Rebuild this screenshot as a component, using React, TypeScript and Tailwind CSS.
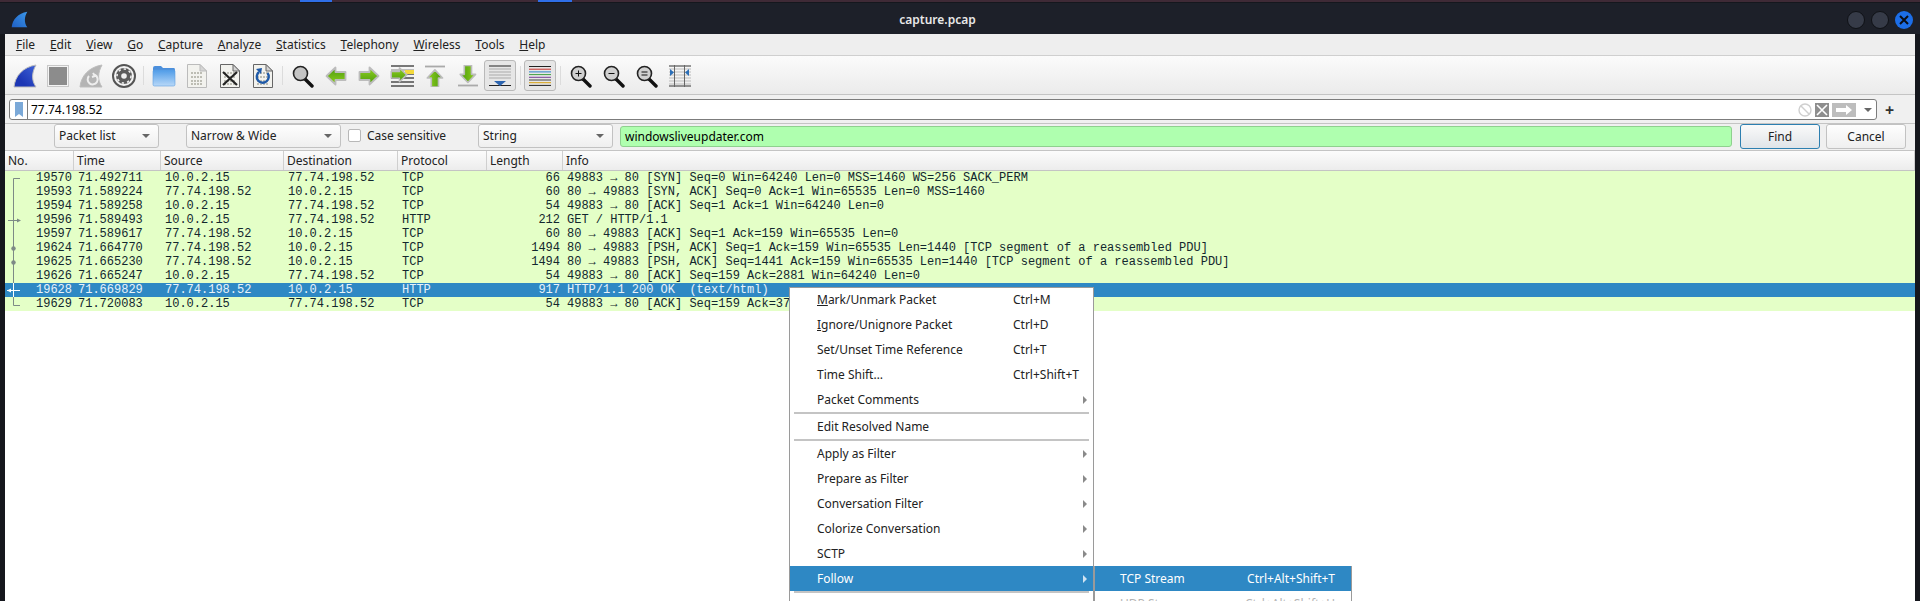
import type { ReactNode } from "react";

type Row = {
  no: string;
  time: string;
  src: string;
  dst: string;
  proto: string;
  len: string;
  info: string;
  mark: "first" | "line" | "req" | "dot" | "resp" | "last";
};

const CLIENT = "10.0.2.15";
const SERVER = "77.74.198.52";

const rows: Row[] = [
  { no: "19570", time: "71.492711", src: CLIENT, dst: SERVER, proto: "TCP", len: "66", info: "49883 → 80 [SYN] Seq=0 Win=64240 Len=0 MSS=1460 WS=256 SACK_PERM", mark: "first" },
  { no: "19593", time: "71.589224", src: SERVER, dst: CLIENT, proto: "TCP", len: "60", info: "80 → 49883 [SYN, ACK] Seq=0 Ack=1 Win=65535 Len=0 MSS=1460", mark: "line" },
  { no: "19594", time: "71.589258", src: CLIENT, dst: SERVER, proto: "TCP", len: "54", info: "49883 → 80 [ACK] Seq=1 Ack=1 Win=64240 Len=0", mark: "line" },
  { no: "19596", time: "71.589493", src: CLIENT, dst: SERVER, proto: "HTTP", len: "212", info: "GET / HTTP/1.1", mark: "req" },
  { no: "19597", time: "71.589617", src: SERVER, dst: CLIENT, proto: "TCP", len: "60", info: "80 → 49883 [ACK] Seq=1 Ack=159 Win=65535 Len=0", mark: "line" },
  { no: "19624", time: "71.664770", src: SERVER, dst: CLIENT, proto: "TCP", len: "1494", info: "80 → 49883 [PSH, ACK] Seq=1 Ack=159 Win=65535 Len=1440 [TCP segment of a reassembled PDU]", mark: "dot" },
  { no: "19625", time: "71.665230", src: SERVER, dst: CLIENT, proto: "TCP", len: "1494", info: "80 → 49883 [PSH, ACK] Seq=1441 Ack=159 Win=65535 Len=1440 [TCP segment of a reassembled PDU]", mark: "dot" },
  { no: "19626", time: "71.665247", src: CLIENT, dst: SERVER, proto: "TCP", len: "54", info: "49883 → 80 [ACK] Seq=159 Ack=2881 Win=64240 Len=0", mark: "line" },
  { no: "19628", time: "71.669829", src: SERVER, dst: CLIENT, proto: "HTTP", len: "917", info: "HTTP/1.1 200 OK  (text/html)", mark: "resp" },
  { no: "19629", time: "71.720083", src: CLIENT, dst: SERVER, proto: "TCP", len: "54", info: "49883 → 80 [ACK] Seq=159 Ack=3744 Win=64240 Len=0", mark: "last" },
];

const menus: [string, string][] = [
  ["F", "ile"], ["E", "dit"], ["V", "iew"], ["G", "o"], ["C", "apture"], ["A", "nalyze"],
  ["S", "tatistics"], ["T", "elephony"], ["W", "ireless"], ["T", "ools"], ["H", "elp"],
];

function Fin({ size = 24, dim = false, light = false }: { size?: number; dim?: boolean; light?: boolean }) {
  const fill = dim ? "#b4b4b4" : light ? "url(#finLight)" : "url(#finDark)";
  return (
    <svg width={size} height={size} viewBox="0 0 24 24">
      <defs>
        <linearGradient id="finDark" x1="0" y1="1" x2="1" y2="0">
          <stop offset="0.3" stopColor="#1c36b4" />
          <stop offset="1" stopColor="#3f63d8" />
        </linearGradient>
        <linearGradient id="finLight" x1="0" y1="1" x2="1" y2="0">
          <stop offset="0" stopColor="#1f5fc4" />
          <stop offset="1" stopColor="#3a96e8" />
        </linearGradient>
      </defs>
      <path d="M1 23 C2 12 10 3 23 1 C19 8 18 16 23 23 Z" fill={fill} stroke={light ? "none" : "#bdbdbd"} strokeWidth="1" />
      {dim && <path d="M16 11 a5 5 0 1 1 -6 1 M14 9 l2 3 -3 1" fill="none" stroke="#eee" strokeWidth="2" />}
    </svg>
  );
}

function DocBase({ children, dark = false }: { children?: ReactNode; dark?: boolean }) {
  const edge = dark ? "#666" : "#bbb";
  return (
    <svg width="22" height="24" viewBox="0 0 22 24">
      <path d="M1.5 .5 H14 L20.5 7 V23.5 H1.5 Z" fill="#f2f2ee" stroke={edge} />
      <path d="M14 .5 V7 H20.5 Z" fill="#d5d5d5" stroke={edge} />
      {[9, 13, 17, 20].map((y) => (
        <path key={y} d={`M5 ${y} H17`} stroke="#bdbdb4" strokeWidth="2" strokeDasharray="2 1" />
      ))}
      {children}
    </svg>
  );
}

function Arrow({ dir }: { dir: "left" | "right" | "up" | "down" }) {
  const rot = { right: 0, left: 180, up: 270, down: 90 }[dir];
  return (
    <g transform={`rotate(${rot} 11 11)`}>
      <path d="M1.5 7 H11.5 V2.5 L20.5 11 L11.5 19.5 V15 H1.5 Z" fill="url(#green)" stroke="#bcbcbc" strokeWidth="1.8" strokeLinejoin="round" />
    </g>
  );
}

function GreenDefs() {
  return (
    <defs>
      <linearGradient id="green" x1="0" y1="0" x2="0" y2="1">
        <stop offset="0" stopColor="#8fd11f" />
        <stop offset="1" stopColor="#4c9a0c" />
      </linearGradient>
    </defs>
  );
}

function GreenArrow({ dir }: { dir: "left" | "right" }) {
  return (
    <svg width="22" height="22" viewBox="0 0 22 22">
      <GreenDefs />
      <Arrow dir={dir} />
    </svg>
  );
}

function Lens({ kind }: { kind?: "plus" | "minus" | "equal" }) {
  return (
    <svg width="22" height="24" viewBox="0 0 22 24">
      <path d="M13 15 L20 22" stroke="#111" strokeWidth="3.4" strokeLinecap="round" />
      <circle cx="8.5" cy="9.5" r="7" fill={kind ? "#d0d0d0" : "#c4c4c4"} stroke="#222" strokeWidth="1.6" />
      {kind && <path d="M5.5 9.5 H11.5" stroke="#111" strokeWidth="1" transform={kind === "equal" ? "translate(0 -1.5)" : undefined} />}
      {kind === "equal" && <path d="M5.5 11 H11.5" stroke="#111" strokeWidth="1" />}
      {kind === "plus" && <path d="M8.5 6.5 V12.5" stroke="#111" strokeWidth="1" />}
    </svg>
  );
}

function Btn({ children, on = false }: { children: ReactNode; on?: boolean }) {
  return on ? (
    <div className="w-[32px] h-[31px] mr-[1px] flex items-center justify-center rounded-[3px] border border-[#b9b9b9] bg-[#e6e6e6]">{children}</div>
  ) : (
    <div className="w-[33px] h-[31px] flex items-center justify-center">{children}</div>
  );
}

function Sep() {
  return (
    <div className="w-[7px] flex justify-center">
      <div className="w-px h-[19px] bg-[#dcdcdc]" />
    </div>
  );
}

function Toolbar() {
  return (
    <div className="h-[39px] flex items-center pl-[3px] pt-px border-b border-[#c4c4c4] bg-gradient-to-b from-[#fbfbfb] to-[#ebebeb]">
      <Btn><Fin /></Btn>
      <Btn>
        <div className="w-[22px] h-[22px] bg-[#8c8c8c] border border-[#c8c8c8] outline outline-1 outline-[#f4f4f4] -outline-offset-2" />
      </Btn>
      <Btn><Fin dim /></Btn>
      <Btn>
        <svg width="24" height="24" viewBox="0 0 24 24">
          <circle cx="12" cy="12" r="11" fill="#f3f3f3" stroke="#555" strokeWidth="2" />
          <circle cx="12" cy="12" r="8" fill="#5c5c5c" />
          <circle cx="12" cy="12" r="7" fill="none" stroke="#eee" strokeWidth="1.6" strokeDasharray="2.4 3" />
          <circle cx="12" cy="12" r="2.8" fill="#f0f0f0" />
        </svg>
      </Btn>
      <Sep />
      <Btn>
        <svg width="24" height="22" viewBox="0 0 24 22">
          <defs>
            <linearGradient id="folder" x1="0" y1="0" x2="0" y2="1">
              <stop offset="0" stopColor="#4f9ce8" />
              <stop offset="1" stopColor="#b8d8f8" />
            </linearGradient>
          </defs>
          <path d="M1 3 Q1 1 3 1 H9 L11 3 H22 Q23 3 23 5 V7 H1 Z" fill="#4b8fdc" />
          <rect x="1" y="5" width="22" height="16" rx="1.5" fill="url(#folder)" stroke="#5f9fdf" strokeWidth=".6" />
        </svg>
      </Btn>
      <Btn><DocBase /></Btn>
      <Btn>
        <DocBase dark>
          <path d="M4 8 L18 21 M18 8 L4 21" stroke="#222" strokeWidth="2.2" />
        </DocBase>
      </Btn>
      <Btn>
        <DocBase dark>
          <path d="M15.5 9 A6 6 0 1 1 7 8" fill="none" stroke="#1f5aa8" strokeWidth="2.4" />
          <path d="M4 5 L10 4 L9 10 Z" fill="#1f5aa8" />
        </DocBase>
      </Btn>
      <Sep />
      <Btn><Lens /></Btn>
      <Btn><GreenArrow dir="left" /></Btn>
      <Btn><GreenArrow dir="right" /></Btn>
      <Btn>
        <svg width="24" height="22" viewBox="0 0 24 22">
          <GreenDefs />
          {[1, 5, 9, 13, 17, 21].map((y) => (
            <path key={y} d={`M1 ${y} H24`} stroke={y === 5 ? "#999" : "#222"} strokeWidth="1.2" />
          ))}
          <rect x="15" y="5" width="9" height="4" fill="#f3d93c" />
          <g transform="translate(0 0) scale(.82) translate(0 1)">
            <Arrow dir="right" />
          </g>
        </svg>
      </Btn>
      <Btn>
        <svg width="22" height="22" viewBox="0 0 22 22">
          <GreenDefs />
          <path d="M1 1.5 H21" stroke="#aaa" strokeWidth="1.8" />
          <g transform="translate(1 3.5) scale(.9)"><Arrow dir="up" /></g>
        </svg>
      </Btn>
      <Btn>
        <svg width="22" height="22" viewBox="0 0 22 22">
          <GreenDefs />
          <g transform="translate(1 -1) scale(.9)"><Arrow dir="down" /></g>
          <path d="M1 20.5 H21" stroke="#aaa" strokeWidth="1.8" />
        </svg>
      </Btn>
      <Btn on>
        <svg width="22" height="22" viewBox="0 0 22 22">
          <path d="M0 1 H22" stroke="#222" />
          {[4, 7, 10, 13].map((y) => (
            <path key={y} d={`M0 ${y} H22`} stroke="#aaa" />
          ))}
          <path d="M0 20.5 H22" stroke="#222" />
          <path d="M5 16 H17 L11 21 Z" fill="#2b63ae" />
        </svg>
      </Btn>
      <Sep />
      <Btn on>
        <svg width="22" height="22" viewBox="0 0 22 22">
          {["#222", "#c9302c", "#2c7fc9", "#3f9e42", "#7a3f9a", "#444", "#d8a010", "#222"].map((c, i) => (
            <path key={i} d={`M0 ${1.5 + i * 2.7} H22`} stroke={c} />
          ))}
        </svg>
      </Btn>
      <Sep />
      <Btn><Lens kind="plus" /></Btn>
      <Btn><Lens kind="minus" /></Btn>
      <Btn><Lens kind="equal" /></Btn>
      <Btn>
        <svg width="22" height="22" viewBox="0 0 22 22">
          {[1, 4, 7, 10, 13, 16, 19, 21].map((y) => (
            <path key={y} d={`M0 ${y} H22`} stroke={y === 1 || y === 21 ? "#333" : "#bbb"} />
          ))}
          <path d="M5.5 0 V22 M15.5 0 V22" stroke="#666" />
          <path d="M1 4 L5 7.5 L1 11 Z M20 4 L16 7.5 L20 11 Z" fill="#2b6fb8" />
        </svg>
      </Btn>
    </div>
  );
}

function Caret() {
  return <div className="w-0 h-0 border-x-[4px] border-x-transparent border-t-[4px] border-t-[#666]" />;
}

function Combo({ label, w }: { label: string; w: string }) {
  return (
    <div className={`${w} h-[24px] flex items-center justify-between pl-[4px] pr-[8px] border border-[#c2c2c2] rounded-[3px] bg-gradient-to-b from-[#fefefe] to-[#efefef]`}>
      <span>{label}</span>
      <Caret />
    </div>
  );
}

function FilterBar() {
  return (
    <div className="h-[29px] flex items-center pl-[4px] pt-px border-b border-[#c4c4c4] bg-[#f0f0f0]">
      <div className="w-[1868px] h-[21px] flex items-center bg-white border border-[#7c7c7c] rounded-[3px]">
        <div className="w-[18px] h-full flex items-center justify-center border-r border-[#7c7c7c] shrink-0">
          <svg width="8" height="15" viewBox="0 0 8 15"><path d="M0 0 H8 V15 L4 12 L0 15 Z" fill="#7ba9d8" /></svg>
        </div>
        <span className="pl-[3px] text-black">{SERVER}</span>
        <div className="ml-auto flex items-center pr-[4px]">
          <svg width="14" height="14" viewBox="0 0 14 14" className="mr-[3px]">
            <circle cx="7" cy="7" r="6" fill="none" stroke="#cfcfcf" strokeWidth="1.4" />
            <path d="M3 3 L11 11" stroke="#cfcfcf" strokeWidth="1.4" />
          </svg>
          <div className="w-[14px] h-[14px] bg-[#8e8e8e] flex items-center justify-center mr-[3px]">
            <svg width="12" height="12" viewBox="0 0 12 12"><path d="M1 1 L11 11 M11 1 L1 11" stroke="#fff" strokeWidth="1.6" /></svg>
          </div>
          <div className="w-[24px] h-[14px] bg-[#bdbdbd] flex items-center justify-center mr-[8px]">
            <svg width="16" height="10" viewBox="0 0 16 10"><path d="M0 3 H10 V0 L16 5 L10 10 V7 H0 Z" fill="#fff" /></svg>
          </div>
          <Caret />
        </div>
      </div>
      <span className="ml-[8px] text-[16px] leading-none font-bold text-[#333]">+</span>
    </div>
  );
}

function FindBar() {
  return (
    <div className="h-[26px] flex items-start pl-[49px] bg-[#f0f0f0] text-[#222]">
      <Combo label="Packet list" w="w-[105px]" />
      <div className="w-[27px]" />
      <Combo label="Narrow & Wide" w="w-[155px]" />
      <div className="w-[13px] h-[13px] ml-[7px] mt-[5px] bg-white border border-[#b8b8b8] rounded-[2px]" />
      <span className="ml-[6px] mt-[4px] w-[111px]">Case sensitive</span>
      <Combo label="String" w="w-[135px]" />
      <div className="w-[1112px] h-[21px] ml-[7px] mt-[2px] flex items-center pl-[4px] bg-[#afffaf] border border-[#8fd08f] rounded-[3px] text-black">
        windowsliveupdater.com
      </div>
      <div className="w-[80px] h-[25px] ml-[8px] flex items-center justify-center rounded-[3px] border border-[#2d7fb0] bg-gradient-to-b from-[#fafafa] to-[#e0e4e8]">Find</div>
      <div className="w-[80px] h-[25px] ml-[6px] flex items-center justify-center rounded-[3px] border border-[#c2c2c2] bg-gradient-to-b from-[#fefefe] to-[#efefef]">Cancel</div>
    </div>
  );
}

function TableHead() {
  const cols: [string, string][] = [
    ["No.", "w-[69px]"], ["Time", "w-[87px]"], ["Source", "w-[123px]"], ["Destination", "w-[114px]"],
    ["Protocol", "w-[89px]"], ["Length", "w-[76px]"], ["Info", "flex-1"],
  ];
  return (
    <div className="h-[21px] flex border-y border-[#c4c4c4] bg-gradient-to-b from-[#fcfcfc] to-[#ececec] text-[#222]">
      {cols.map(([name, w]) => (
        <div key={name} className={`${w} pl-[3px] flex items-center border-r border-[#cfcfcf]`}>{name}</div>
      ))}
    </div>
  );
}

function RowMark({ mark }: { mark: Row["mark"] }) {
  const c = mark === "resp" ? "#fff" : "#7d8a86";
  return (
    <svg width="16" height="14" viewBox="0 0 16 14" className="absolute left-0 top-0">
      {mark === "first" && <path d="M8.5 14 V7.5 H15" fill="none" stroke={c} />}
      {mark === "last" && <path d="M8.5 0 V8.5 H15" fill="none" stroke={c} />}
      {mark === "line" && <path d="M8.5 0 V14" stroke={c} />}
      {mark === "dot" && (
        <>
          <path d="M8.5 0 V14" stroke={c} />
          <circle cx="8.5" cy="7.5" r="2.2" fill={c} />
        </>
      )}
      {mark === "req" && (
        <>
          <path d="M8.5 0 V14 M3 7.5 H13" stroke={c} />
          <path d="M12 5.5 L16 7.5 L12 9.5 Z" fill={c} />
        </>
      )}
      {mark === "resp" && (
        <>
          <path d="M8.5 0 V14 M2 7.5 H15" stroke={c} />
          <path d="M6 5.5 L2 7.5 L6 9.5 Z" fill={c} />
        </>
      )}
    </svg>
  );
}

function PacketRow({ row }: { row: Row }) {
  const selected = row.no === "19628";
  return (
    <div className={`h-[14px] flex items-center leading-[14px] whitespace-pre ${selected ? "bg-[#2e88c4] text-[#e8f2fa]" : "bg-[#e4ffc7] text-[#12272e]"}`}>
      <div className="relative w-[69px] h-full pr-[2px] text-right">
        <RowMark mark={row.mark} />
        {row.no}
      </div>
      <div className="w-[87px] pl-[4px]">{row.time}</div>
      <div className="w-[123px] pl-[4px]">{row.src}</div>
      <div className="w-[114px] pl-[4px]">{row.dst}</div>
      <div className="w-[89px] pl-[4px]">{row.proto}</div>
      <div className="w-[76px] pr-[3px] text-right">{row.len}</div>
      <div className="flex-1 pl-[4px]">{row.info}</div>
    </div>
  );
}

function Item({ label, hot, rest, keys, sub, active }: { label?: string; hot?: string; rest?: string; keys?: string; sub?: boolean; active?: boolean }) {
  return (
    <div className={`relative h-[25px] shrink-0 flex items-center pl-[27px] ${active ? "bg-[#2e88c4] text-white" : "text-[#222]"}`}>
      <span>
        {hot && <span className="underline">{hot}</span>}
        {rest}
        {label}
      </span>
      {keys && <span className="absolute left-[223px]">{keys}</span>}
      {sub && <div className={`absolute right-[6px] w-0 h-0 border-y-[4px] border-y-transparent border-l-[4px] ${active ? "border-l-[#cfe3f2]" : "border-l-[#8a8a8a]"}`} />}
    </div>
  );
}

function MenuSep() {
  return <div className="h-[2px] mx-[4px] bg-[#c4c4c4] shrink-0" />;
}

function ContextMenu() {
  return (
    <div className="absolute left-[789px] top-[287px] w-[305px] h-[314px] flex flex-col overflow-hidden bg-white border-x border-t border-[#9a9a9a]">
      <div className="-mt-px flex flex-col">
        <Item hot="M" rest="ark/Unmark Packet" keys="Ctrl+M" />
        <Item hot="I" rest="gnore/Unignore Packet" keys="Ctrl+D" />
        <Item label="Set/Unset Time Reference" keys="Ctrl+T" />
        <Item label="Time Shift…" keys="Ctrl+Shift+T" />
        <Item label="Packet Comments" sub />
        <MenuSep />
        <Item label="Edit Resolved Name" />
        <MenuSep />
        <Item label="Apply as Filter" sub />
        <Item label="Prepare as Filter" sub />
        <Item label="Conversation Filter" sub />
        <Item label="Colorize Conversation" sub />
        <Item label="SCTP" sub />
        <Item label="Follow" sub active />
        <MenuSep />
      </div>
    </div>
  );
}

function SubMenu() {
  return (
    <div className="absolute left-[1094px] top-[566px] w-[258px] h-[35px] overflow-hidden bg-white border-x border-[#9a9a9a]">
      <div className="h-[25px] flex items-center justify-between pl-[25px] pr-[16px] bg-[#2e88c4] text-white">
        <span>TCP Stream</span>
        <span>Ctrl+Alt+Shift+T</span>
      </div>
      <div className="h-[25px] flex items-center justify-between pl-[25px] pr-[16px] text-[#b4b4b4]">
        <span>UDP Stream</span>
        <span>Ctrl+Alt+Shift+U</span>
      </div>
    </div>
  );
}

export default function App() {
  return (
    <div className="relative w-[1920px] h-[601px] overflow-hidden bg-[#15171d] font-['Noto_Sans',sans-serif] text-[12px] leading-[16px]">
      <div className="h-[2px] flex bg-[#3f2a36]">
        <div className="ml-[300px] w-[32px] bg-[#2f6fe8]" />
        <div className="ml-[206px] w-[34px] bg-[#2f6fe8]" />
      </div>
      <div className="h-[32px] flex items-center pl-[11px] pr-[7px] pt-[2px] border-t border-[#15171d] bg-[#1d2029]">
        <Fin size={17} light />
        <span className="flex-1 text-center font-semibold text-[#e8e8e8]">capture.pcap</span>
        <div className="flex gap-[6px] shrink-0">
          <div className="w-[18px] h-[18px] rounded-full bg-[#363b48] border border-[#0f1116]" />
          <div className="w-[18px] h-[18px] rounded-full bg-[#363b48] border border-[#0f1116]" />
          <div className="w-[18px] h-[18px] rounded-full bg-[#1c6ee8] flex items-center justify-center">
            <svg width="10" height="10" viewBox="0 0 10 10"><path d="M1 1 L9 9 M9 1 L1 9" stroke="#0b0d14" strokeWidth="2" /></svg>
          </div>
        </div>
      </div>
      <div className="h-[567px] mx-[5px] flex flex-col bg-white">
        <div className="h-[22px] shrink-0 flex items-center pl-[3.5px] border-b border-[#cfcfcf] bg-[#eeeeee] text-[#222]">
          {menus.map(([hot, rest]) => (
            <div key={hot + rest} className="px-[7.4px]">
              <span className="underline">{hot}</span>
              {rest}
            </div>
          ))}
        </div>
        <Toolbar />
        <FilterBar />
        <FindBar />
        <TableHead />
        <div className="font-['Liberation_Mono',monospace] text-[12px]">
          {rows.map((row) => (
            <PacketRow key={row.no} row={row} />
          ))}
        </div>
      </div>
      <ContextMenu />
      <SubMenu />
    </div>
  );
}
